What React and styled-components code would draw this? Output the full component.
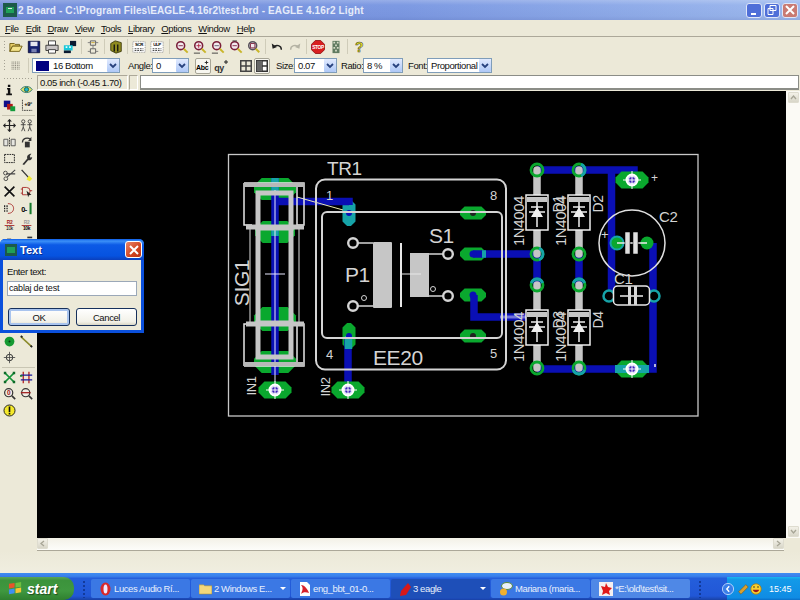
import React from "react";
import styled, { createGlobalStyle } from "styled-components";

const Global = createGlobalStyle`
  html, body { margin: 0; padding: 0; background: #ece9d8; overflow: hidden; }
  * { box-sizing: border-box; }
`;

const Screen = styled.div`
  position: relative;
  width: 800px;
  height: 600px;
  display: flex;
  flex-direction: column;
  background: #ece9d8;
  font-family: "Liberation Sans", Arial, sans-serif;
  font-size: 9.5px;
  letter-spacing: -0.4px;
  color: #111;
  overflow: hidden;
`;

const TitleBar = styled.div`
  height: 20px;
  flex: none;
  display: flex;
  align-items: center;
  padding: 0 2px 0 3px;
  background: linear-gradient(180deg, rgba(255,255,255,.22) 0, rgba(255,255,255,.02) 25%, rgba(0,0,40,.02) 80%, rgba(0,0,60,.08) 100%),
    linear-gradient(90deg, #7590dc 0, #7b98e2 50%, #9db9ee 100%);
`;

const TitleText = styled.div`
  flex: 1;
  margin-left: 1px;
  color: #e6ecfa;
  font-weight: bold;
  font-size: 10px;
  letter-spacing: 0.12px;
  white-space: nowrap;
`;

const CaptionBtn = styled.div`
  width: 16px;
  height: 15px;
  margin-left: 2px;
  border: 1px solid #dfe6f8;
  border-radius: 3px;
  background: ${(p) => (p.$close ? "#c97a72" : "#4f6fd8")};
  display: flex;
  align-items: center;
  justify-content: center;
`;

const MenuBar = styled.div`
  height: 17px;
  flex: none;
  display: flex;
  align-items: center;
  gap: 7px;
  padding: 0 5px;
  border-bottom: 1px solid #aca899;
`;

const MenuItem = styled.span`
  &::first-letter { text-decoration: underline; }
`;

const ToolRow = styled.div`
  height: 19px;
  flex: none;
  display: flex;
  align-items: center;
`;

const Grip = styled.div`
  width: 3px;
  height: 13px;
  margin: 0 1px 0 3px;
  flex: none;
  background: radial-gradient(circle, #a5a294 0.8px, transparent 1px) 0 0 / 3px 3px;
`;

const ToolBtn = styled.div`
  width: 18px;
  height: 18px;
  flex: none;
  display: flex;
  align-items: center;
  justify-content: center;
  svg { width: 14px; height: 14px; }
`;

const ToolSep = styled.div`
  width: 1px;
  height: 15px;
  flex: none;
  margin: 0 ${(p) => p.$m || 2}px;
  background: #cfccb9;
`;

const ParamLabel = styled.span`
  flex: none;
  width: ${(p) => p.$w}px;
  margin-left: ${(p) => p.$m}px;
  white-space: nowrap;
`;

const Combo = styled.div`
  width: ${(p) => p.$w}px;
  height: 15px;
  flex: none;
  display: flex;
  align-items: center;
  padding-left: 3px;
  background: #fff;
  border: 1px solid #7f9db9;
`;

const ComboText = styled.span`
  flex: 1;
  white-space: nowrap;
  margin-left: ${(p) => p.$m || 0}px;
`;

const Swatch = styled.span`
  width: 13px;
  height: 10px;
  flex: none;
  background: #000080;
`;

const ComboArrow = styled.span`
  width: 12px;
  height: 13px;
  flex: none;
  background: linear-gradient(180deg, #e1eafe, #aec8f7);
  border-radius: 1px;
  display: flex;
  align-items: center;
  justify-content: center;
`;

const ToggleBox = styled.div`
  width: 16px;
  height: 16px;
  flex: none;
  margin: ${(p) => p.$m || "0"};
  display: flex;
  align-items: center;
  justify-content: center;
  border: ${(p) => (p.$on ? "1px solid #a7a596" : "none")};
  border-radius: 2px;
  background: ${(p) => (p.$on ? "#f7f6ef" : "transparent")};
`;

const Work = styled.div`
  flex: 1;
  min-height: 0;
  display: flex;
`;

const Rail = styled.div`
  width: 37px;
  flex: none;
  padding-top: 2px;
`;

const RailGrip = styled.div`
  width: 30px;
  height: 4px;
  margin-left: 3px;
  background: radial-gradient(circle, #a5a294 0.8px, transparent 1px) 0 0 / 3px 3px;
`;

const RailGroup = styled.div`
  display: grid;
  grid-template-columns: 17px 17px;
  grid-auto-rows: 16.6px;
  padding-left: 1px;
`;

const RailCell = styled.div`
  display: flex;
  align-items: center;
  justify-content: center;
  svg { width: 13px; height: 13px; }
`;

const RailSep = styled.div`
  height: 1px;
  margin: 1px 2px;
  background: #c9c6b4;
`;

const Main = styled.div`
  flex: 1;
  min-width: 0;
  display: flex;
  flex-direction: column;
`;

const CommandRow = styled.div`
  height: 15px;
  flex: none;
  display: flex;
  gap: 1px;
`;

const CoordBox = styled.div`
  width: 91px;
  border: 1px solid #aca899;
  border-right-color: #fff;
  border-bottom-color: #fff;
  padding-left: 2px;
  line-height: 13px;
  white-space: nowrap;
`;

const SmallBox = styled.div`
  width: 9px;
  border: 1px solid #aca899;
  border-right-color: #fff;
  border-bottom-color: #fff;
`;

const CommandInput = styled.div`
  flex: 1;
  margin: 0 1px;
  background: #fff;
  border: 1px solid #8b8d87;
  border-bottom-width: 2px;
`;

const CanvasRow = styled.div`
  flex: 1;
  min-height: 0;
  display: flex;
  margin-top: 1px;
`;

const Canvas = styled.div`
  flex: 1;
  min-width: 0;
  background: #000;
  display: flex;
`;

const PcbSvg = styled.svg`
  display: block;
  width: 749px;
  height: 447px;
`;

const VScroll = styled.div`
  width: 14px;
  flex: none;
  background: #fbfaf5;
  display: flex;
  flex-direction: column;
  justify-content: space-between;
`;

const HScrollRow = styled.div`
  height: 13px;
  flex: none;
  display: flex;
`;

const HScroll = styled.div`
  flex: 1;
  background: linear-gradient(180deg, #f3f1e7, #fdfdfa);
  border-bottom: 1px solid #aca899;
  display: flex;
  justify-content: space-between;
`;

const ScrollBtn = styled.div`
  width: 11px;
  height: 11px;
  margin: ${(p) => (p.$v ? "1px 0 1px 2px" : "0")};
  background: linear-gradient(180deg, #f3f1e8, #d8d6c8);
  border: 1px solid #dedccf;
  border-radius: 1px;
  display: flex;
  align-items: center;
  justify-content: center;
`;

const Corner = styled.div`
  width: 16px;
  background: #ece9d8;
`;

const StatusBar = styled.div`
  height: 22px;
  flex: none;
  background: linear-gradient(180deg, #ece9d8, #f0eee0);
`;

const Taskbar = styled.div`
  height: 27px;
  flex: none;
  display: flex;
  align-items: flex-end;
  background: linear-gradient(180deg, #3f8cf3 0, #3a80ea 12%, #245edb 20%, #2157d7 85%, #1941a5 100%);
  color: #fff;
`;

const StartBtn = styled.div`
  width: 74px;
  height: 23px;
  flex: none;
  display: flex;
  align-items: center;
  padding-left: 8px;
  gap: 4px;
  border-radius: 0 10px 10px 0;
  background: linear-gradient(180deg, #5aa55a 0, #3c933c 15%, #3f983f 60%, #2f7f2f 100%);
`;

const StartLabel = styled.span`
  font-style: italic;
  font-weight: bold;
  font-size: 14px;
  letter-spacing: 0;
  color: #fff;
  text-shadow: 1px 1px 1px #1d4d1d;
`;

const TaskGrip = styled.div`
  width: 5px;
  height: 18px;
  flex: none;
  margin: ${(p) => p.$m || "0 4px 2px 8px"};
  background: radial-gradient(circle, #123a9a 1px, transparent 1.2px) 0 0 / 4px 4px;
`;

const TaskBtn = styled.div`
  width: 99px;
  height: 19px;
  flex: none;
  margin: 0 1px 2px 0;
  padding: 0 4px 0 8px;
  display: flex;
  align-items: center;
  gap: 2px;
  border-radius: 2px;
  white-space: nowrap;
  color: #e8effc;
  background: ${(p) => (p.$active ? "#1e4fb8" : p.$bright ? "#4f88e6" : "#3b78e4")};
`;

const TaskText = styled.span`
  flex: 1;
  overflow: hidden;
`;

const Tray = styled.div`
  margin-left: auto;
  width: 73px;
  height: 23px;
  flex: none;
  display: flex;
  align-items: center;
  gap: 1px;
  background: linear-gradient(180deg, #18b8f0 0, #139ae8 10%, #0f8ce4 90%, #0a6fc8 100%);
`;

const TrayChevron = styled.svg`
  margin: 0 2px 0 -5px;
`;

const Clock = styled.span`
  margin-left: 6px;
  letter-spacing: 0;
  font-size: 9px;
`;

const Dialog = styled.div`
  position: absolute;
  left: 0;
  top: 239px;
  width: 144px;
  height: 94px;
  display: flex;
  flex-direction: column;
  background: #0b50dc;
  border-radius: 5px 5px 0 0;
  padding: 0 3px 3px;
`;

const DialogHead = styled.div`
  height: 21px;
  flex: none;
  display: flex;
  align-items: center;
  margin: 0 -3px;
  padding: 0 2px 0 5px;
  border-radius: 5px 5px 0 0;
  background: linear-gradient(180deg, #0b5be6 0, #3c91f8 10%, #0c5ae6 28%, #0653e0 80%, #0a3fbc 100%);
`;

const DialogTitle = styled.span`
  flex: 1;
  margin-left: 3px;
  color: #fff;
  font-weight: bold;
  font-size: 11px;
  letter-spacing: 0;
  text-shadow: 1px 1px 0 #0a2f90;
`;

const DialogClose = styled.div`
  width: 17px;
  height: 17px;
  display: flex;
  align-items: center;
  justify-content: center;
  border: 1px solid #fff;
  border-radius: 3px;
  background: linear-gradient(135deg, #e8866a, #d2441f 60%, #b93212);
`;

const DialogBody = styled.div`
  flex: 1;
  display: flex;
  flex-direction: column;
  background: #ece9d8;
  padding: 6px 4px 0;
  line-height: 11px;
`;

const DialogInput = styled.div`
  height: 15px;
  margin-top: 4px;
  padding-left: 1px;
  background: #fff;
  border: 1px solid #9ba8b8;
  font-size: 9px;
  letter-spacing: -0.2px;
  line-height: 13px;
`;

const DialogActions = styled.div`
  display: flex;
  gap: 6px;
  margin-top: 12px;
  padding-left: 1px;
`;

const DialogBtn = styled.div`
  width: ${(p) => (p.$def ? 62 : 61)}px;
  height: 18px;
  display: flex;
  align-items: center;
  justify-content: center;
  border-radius: 3px;
  border: 1px solid #16305c;
  background: linear-gradient(180deg, #fff, #f2f1e8 80%, #d9d6c5);
  box-shadow: ${(p) => (p.$def ? "inset 0 0 0 2px #a9c4ee" : "none")};
`;

/* toolbar and rail pictures, all on a 16x16 grid */
const Ico = ({ s = 16, children }) => (
  <svg width={s} height={s} viewBox="0 0 16 16" style={{ display: "block" }}>
    {children}
  </svg>
);

const Magnifier = ({ children }) => (
  <Ico>
    <circle cx="6.500" cy="6.500" r="4.500" fill="#f2e9ee" stroke="#7a1f3a" strokeWidth="1.800" />
    <path d="M10 10l4.500 4.500" stroke="#c9b52a" strokeWidth="2.200" />
    {children}
  </Ico>
);

const icons = {
  open: (
    <Ico>
      <path d="M1 4h5l1 1h5v2H4L1 13z" fill="#e8cf6a" stroke="#6b5a10" />
      <path d="M4 7h11l-3 6H1z" fill="#f4e48a" stroke="#6b5a10" />
    </Ico>
  ),
  save: (
    <Ico>
      <path d="M1.500 1.500h13v13h-13z" fill="#15206e" stroke="#0a0f3c" />
      <path d="M4 2h8v5H4z" fill="#e6e6ee" />
      <path d="M5 10h6v4H5z" fill="#7880b0" />
    </Ico>
  ),
  print: (
    <Ico>
      <path d="M4 1h8v5H4z" fill="#fff" stroke="#333" />
      <path d="M1 6h14v6H1z" fill="#c8c4c4" stroke="#333" />
      <path d="M4 11h8v4H4z" fill="#fff" stroke="#333" />
    </Ico>
  ),
  layers: (
    <Ico>
      <path d="M8 1h7v6H8z" fill="#0b1a30" />
      <path d="M1 6h10v6H1z" fill="#18c8d8" />
      <path d="M1 12h8v3H1z" fill="#0b1a30" />
      <path d="M3 7h2v2H3zM7 7h2v2H7z" fill="#e8fbff" />
    </Ico>
  ),
  chip: (
    <Ico>
      <path d="M5 1h6v5H5zM5 10h6v5H5z" fill="none" stroke="#555" />
      <path d="M8 6v4M2 3h3M11 3h3M2 13h3M11 13h3" stroke="#777" />
      <path d="M6 3h4" stroke="#c9a72a" />
    </Ico>
  ),
  book: (
    <Ico>
      <path d="M2 4l5-3 7 2v10l-6 2-6-3z" fill="#8f8a1e" stroke="#3a3808" />
      <path d="M6 5v8M10 5v8" stroke="#111" strokeWidth="1.500" />
    </Ico>
  ),
  scr: (
    <Ico>
      <path d="M1 2h14v12H1z" fill="#fff" stroke="#888" strokeDasharray="1 1" />
      <text x="8" y="7" fontSize="5" textAnchor="middle" fontFamily="Liberation Sans" fontWeight="bold">SCR</text>
      <path d="M3 10h10M3 12h10" stroke="#333" strokeDasharray="2 1" />
    </Ico>
  ),
  ulp: (
    <Ico>
      <path d="M1 2h14v12H1z" fill="#fff" stroke="#888" strokeDasharray="1 1" />
      <text x="8" y="7" fontSize="5" textAnchor="middle" fontFamily="Liberation Sans" fontWeight="bold">ULP</text>
      <path d="M3 10h10M3 12h10" stroke="#333" strokeDasharray="2 1" />
    </Ico>
  ),
  zoomFit: <Magnifier><path d="M4 6.500h5" stroke="#7a1f3a" /></Magnifier>,
  zoomIn: <Magnifier><path d="M4 6.500h5M6.500 4v5" stroke="#b0203a" /><path d="M1 15h7" stroke="#333" /></Magnifier>,
  zoomOut: <Magnifier><path d="M4 6.500h5" stroke="#556" /><path d="M1 15h7" stroke="#333" /></Magnifier>,
  zoomSel: <Magnifier><path d="M4 6.500h5" stroke="#7a1f3a" /><path d="M4 1h5" stroke="#333" /></Magnifier>,
  zoomBox: (
    <Ico>
      <circle cx="6.500" cy="6.500" r="4.500" fill="#f2e9ee" stroke="#57505a" strokeWidth="1.800" />
      <path d="M4 4h5v5H4z" fill="none" stroke="#7a1f3a" />
      <path d="M10 10l4 4" stroke="#c9b52a" strokeWidth="2.200" />
    </Ico>
  ),
  undo: (
    <Ico>
      <path d="M13 11c0-5-6-6-9-3" fill="none" stroke="#222" strokeWidth="1.600" />
      <path d="M2 4l1 6 5-2z" fill="#222" />
    </Ico>
  ),
  redo: (
    <Ico>
      <path d="M3 11c0-5 6-6 9-3" fill="none" stroke="#b4b2a4" strokeWidth="1.600" />
      <path d="M14 4l-1 6-5-2z" fill="#b4b2a4" />
    </Ico>
  ),
  stop: (
    <Ico>
      <path d="M5 .5h6L15.500 5v6L11 15.500H5L.5 11V5z" fill="#d81f1f" stroke="#901010" />
      <text x="8" y="10" fontSize="5.500" textAnchor="middle" fill="#fff" fontFamily="Liberation Sans" fontWeight="bold">STOP</text>
    </Ico>
  ),
  cam: (
    <Ico>
      <path d="M4 1h8v14H4z" fill="#5f7a5f" />
      <path d="M5 2h2v2H5zM9 2h2v2H9zM7 5h2v2H7zM5 8h2v2H5zM9 8h2v2H9zM7 11h2v2H7z" fill="#d8dcc8" />
    </Ico>
  ),
  help: (
    <Ico>
      <text x="8" y="14" fontSize="16" textAnchor="middle" fill="#f2ee1a" stroke="#333" strokeWidth=".6" fontFamily="Liberation Sans" fontWeight="bold">?</text>
    </Ico>
  ),
  dots: (
    <Ico>
      <path d="M3 3.500h10M3 5.500h10M3 7.500h10M3 9.500h10M3 11.500h10" stroke="#6b695e" strokeDasharray="1 1" />
    </Ico>
  ),
  abc: (
    <Ico>
      <text x="7" y="13" fontSize="8" textAnchor="middle" fontFamily="Liberation Sans" fontWeight="bold">Abc</text>
      <path d="M12 2v4M10 4h4" stroke="#222" />
    </Ico>
  ),
  mirrorText: (
    <Ico>
      <text x="6" y="13" fontSize="9" textAnchor="middle" fontFamily="Liberation Sans" fontWeight="bold" fill="#333">qy</text>
      <path d="M13 2v4M11 4h4" stroke="#222" />
    </Ico>
  ),
  boxCross: (
    <Ico s={12}>
      <path d="M1 1h14v14H1zM8 1v14M1 8h14" fill="none" stroke="#444" strokeWidth="2" />
    </Ico>
  ),
  boxHalf: (
    <Ico s={12}>
      <path d="M1 1h14v14H1z" fill="#fff" stroke="#333" strokeWidth="2" />
      <path d="M8 1v14M8 8h7" stroke="#333" strokeWidth="2" />
      <path d="M1 1h7v14H1z" fill="#666" />
    </Ico>
  ),
  info: (
    <Ico>
      <path d="M6 2h3v3H6zM5 6h4v7h2v2H4v-2h2V8H5z" fill="#111" />
    </Ico>
  ),
  eye: (
    <Ico>
      <path d="M1 8c3-5 11-5 14 0-3 5-11 5-14 0z" fill="#e6e36a" stroke="#136a6a" />
      <circle cx="8" cy="8" r="2.600" fill="#18b8c8" stroke="#0b4a4a" />
    </Ico>
  ),
  display: (
    <Ico>
      <path d="M1 2h8v8H1z" fill="#10108a" />
      <path d="M5 6h7v7H5z" fill="#b01818" />
      <path d="M9 9h6v6H9z" fill="#129a3a" />
    </Ico>
  ),
  mark: (
    <Ico>
      <path d="M3 1v13h12" fill="none" stroke="#222" strokeDasharray="2 1" />
      <text x="10" y="8" fontSize="7" textAnchor="middle" fontFamily="Liberation Sans" fontWeight="bold">+9°</text>
    </Ico>
  ),
  move: (
    <Ico>
      <path d="M8 1v14M1 8h14" stroke="#222" strokeWidth="1.500" />
      <path d="M8 0l-3 3h6zM8 16l-3-3h6zM0 8l3-3v6zM16 8l-3-3v6z" fill="#222" />
    </Ico>
  ),
  copy: (
    <Ico>
      <circle cx="4" cy="3" r="2" fill="none" stroke="#333" />
      <circle cx="12" cy="3" r="2" fill="none" stroke="#333" />
      <path d="M4 5v5M1 7h6M4 10l-2 5M4 10l2 5M12 5v5M9 7h6M12 10l-2 5M12 10l2 5" stroke="#333" />
    </Ico>
  ),
  mirror: (
    <Ico>
      <path d="M1 4h5v8H1zM10 4h5v8h-5z" fill="#e6e6e0" stroke="#444" />
      <path d="M8 2v12" stroke="#222" strokeDasharray="2 1" />
    </Ico>
  ),
  rotate: (
    <Ico>
      <path d="M6 7h6v7H6z" fill="#333" />
      <path d="M3 8C3 3 9 1 13 4" fill="none" stroke="#333" strokeWidth="1.500" />
      <path d="M14 1v5h-4z" fill="#333" />
    </Ico>
  ),
  group: (
    <Ico>
      <path d="M2 3h12v10H2z" fill="none" stroke="#222" strokeDasharray="2 1" strokeWidth="1.200" />
    </Ico>
  ),
  change: (
    <Ico>
      <path d="M3 15l6-7c-1-3 1-6 5-6l-2 3 1 2 2-1c0 3-3 5-5 4l-5 6z" fill="#333" />
    </Ico>
  ),
  cut: (
    <Ico>
      <path d="M15 1L5 10M15 6L4 6" stroke="#444" strokeWidth="1.300" />
      <circle cx="3.500" cy="12" r="2.300" fill="none" stroke="#333" />
      <circle cx="3" cy="5" r="2.300" fill="none" stroke="#333" />
    </Ico>
  ),
  paste: (
    <Ico>
      <path d="M2 1l9 10" stroke="#333" strokeWidth="1.600" />
      <path d="M11 8l4 4-3 3-4-2z" fill="#f2ea30" />
    </Ico>
  ),
  del: (
    <Ico>
      <path d="M2 2l12 12M14 2L2 14" stroke="#111" strokeWidth="2" />
    </Ico>
  ),
  add: (
    <Ico>
      <path d="M3 3h5a4 4 0 010 9H3z" fill="none" stroke="#a01818" />
      <path d="M1 5h2M1 10h2M12 7h3" stroke="#a01818" />
      <path d="M8 7l6 5-3 .5L10 15z" fill="#222" />
    </Ico>
  ),
  pinswap: (
    <Ico>
      <path d="M6 2c5 0 7 3 7 6s-2 6-7 6" fill="none" stroke="#a01818" />
      <path d="M2 4v8M5 4v8" stroke="#222" strokeDasharray="2 1" strokeWidth="1.500" />
    </Ico>
  ),
  gateswap: (
    <Ico>
      <text x="5" y="12" fontSize="9" textAnchor="middle" fontFamily="Liberation Sans" fontWeight="bold">0-</text>
      <path d="M13 1v14" stroke="#167a2c" strokeWidth="2.500" />
    </Ico>
  ),
  name: (
    <Ico>
      <text x="8" y="6" fontSize="6" textAnchor="middle" fill="#a01818" fontFamily="Liberation Sans" fontWeight="bold">R2</text>
      <path d="M2 8h12" stroke="#a01818" />
      <text x="8" y="14" fontSize="6" textAnchor="middle" fontFamily="Liberation Sans">10k</text>
    </Ico>
  ),
  value: (
    <Ico>
      <text x="8" y="6" fontSize="6" textAnchor="middle" fill="#999" fontFamily="Liberation Sans" fontWeight="bold">R2</text>
      <path d="M2 8h12" stroke="#a01818" />
      <text x="8" y="14" fontSize="6" textAnchor="middle" fontFamily="Liberation Sans" fontWeight="bold">10k</text>
    </Ico>
  ),
  smash: (
    <Ico>
      <path d="M2 8h11v7H2z" fill="none" stroke="#333" />
      <path d="M5 8V5h5v3" fill="none" stroke="#333" />
    </Ico>
  ),
  split: (
    <Ico>
      <path d="M1 14L15 6" stroke="#333" strokeWidth="2" />
      <path d="M9 3h6" stroke="#333" strokeWidth="2" />
    </Ico>
  ),
  via: (
    <Ico>
      <circle cx="8" cy="8" r="6" fill="#159a32" />
      <circle cx="8" cy="8" r="1.200" fill="#0a3a14" />
    </Ico>
  ),
  route: (
    <Ico>
      <path d="M1 2l13 12" stroke="#8a8a2a" strokeWidth="1.800" />
      <path d="M1 1l2 2M13 13l2 2" stroke="#222" strokeWidth="2" />
    </Ico>
  ),
  hole: (
    <Ico>
      <circle cx="8" cy="8" r="4" fill="#ece9d8" stroke="#333" strokeWidth="1.200" />
      <path d="M8 1v14M1 8h14" stroke="#444" />
    </Ico>
  ),
  ratsnest: (
    <Ico>
      <path d="M2 2l12 12M14 2L2 14" stroke="#16933a" strokeWidth="1.800" />
      <path d="M1 1h3v3H1zM12 1h3v3h-3zM1 12h3v3H1zM12 12h3v3h-3z" fill="#0c6a28" />
    </Ico>
  ),
  auto: (
    <Ico>
      <path d="M4 1v14M11 1v14" stroke="#b01818" strokeWidth="1.500" />
      <path d="M1 5h14M1 11h14" stroke="#1a1a9a" strokeWidth="1.500" />
      <path d="M0 6l3 0" stroke="#167a2c" strokeWidth="2" />
    </Ico>
  ),
  ripup: (
    <Ico>
      <circle cx="7" cy="7" r="5" fill="#f0ece4" stroke="#333" strokeWidth="1.500" />
      <text x="7" y="10" fontSize="8" textAnchor="middle" fill="#a01818" fontFamily="Liberation Sans" fontWeight="bold">0</text>
      <path d="M11 11l4 4" stroke="#333" strokeWidth="2" />
    </Ico>
  ),
  show: (
    <Ico>
      <circle cx="7" cy="7" r="5" fill="#f0ece4" stroke="#333" strokeWidth="1.500" />
      <path d="M1 7h12" stroke="#a01818" strokeWidth="1.500" />
      <path d="M11 11l4 4" stroke="#333" strokeWidth="2" />
    </Ico>
  ),
  drc: (
    <Ico>
      <circle cx="8" cy="8" r="6.800" fill="#f5e92a" stroke="#222" strokeWidth="1.200" />
      <path d="M7 3h2v7H7zM7 11h2v2H7z" fill="#111" />
    </Ico>
  ),
};

const Chevron = () => (
  <svg width="8" height="6" viewBox="0 0 8 6">
    <path d="M1 1l3 3 3-3" fill="none" stroke="#28427e" strokeWidth="1.800" />
  </svg>
);

const ScrollArrow = ({ d }) => (
  <svg width="7" height="7" viewBox="0 0 7 7">
    <path d={d} fill="none" stroke="#a7a596" strokeWidth="1.300" />
  </svg>
);

const menu = ["File", "Edit", "Draw", "View", "Tools", "Library", "Options", "Window", "Help"];

const railTop = ["info", "eye", "display", "mark"];
const railEdit = [
  "move", "copy", "mirror", "rotate", "group", "change", "cut", "paste", "del", "add",
  "pinswap", "gateswap", "name", "value", "smash", "split",
];
const railRoute = ["via", "route", "hole", null];
const railLast = ["ratsnest", "auto", "ripup", "show", "drc", null];

const Combobox = ({ w, text }) => (
  <Combo $w={w}>
    <ComboText>{text}</ComboText>
    <ComboArrow><Chevron /></ComboArrow>
  </Combo>
);

const RailIcons = ({ names }) => (
  <RailGroup>
    {names.map((n, i) => (
      <RailCell key={i}>{n && icons[n]}</RailCell>
    ))}
  </RailGroup>
);

const GREEN = "#0aa82e";
const BLUE = "#0a0fb4";
const TEAL = "#16a3a8";
const GRAY = "#c6c6c6";
const LINE = "#d4d4d4";

const octagon = (cx, cy, w, h) => {
  const c = Math.min(w, h) * 0.35;
  const x = w / 2;
  const y = h / 2;
  return [
    [cx - x + c, cy - y], [cx + x - c, cy - y], [cx + x, cy - y + c], [cx + x, cy + y - c],
    [cx + x - c, cy + y], [cx - x + c, cy + y], [cx - x, cy + y - c], [cx - x, cy - y + c],
  ].map((p) => p.join(",")).join(" ");
};

const Pad = ({ x, y, w, h, fill = GREEN }) => (
  <polygon points={octagon(x, y, w, h)} fill={fill} />
);

const PlatedPad = ({ x, y, w = 33, h = 17, tint }) => (
  <g>
    <Pad x={x} y={y} w={w} h={h} />
    {tint && <rect x={x - 17} y={y - 4} width={34} height={8} fill={TEAL} />}
    <circle cx={x} cy={y} r="5.500" fill="#d8d8f4" stroke="#fff" strokeWidth="2" />
    <circle cx={x} cy={y} r="3" fill="#3a1fb8" />
    <path d={`M${x - 9} ${y}h18M${x} ${y - 9}v18`} stroke="#fff" strokeWidth="1" />
  </g>
);

const arc = (x, y, from, to) => {
  const r = 6;
  const pt = (a) => `${x + r * Math.cos((a * Math.PI) / 180)} ${y + r * Math.sin((a * Math.PI) / 180)}`;
  return `M${pt(from)}A${r} ${r} 0 0 1 ${pt(to)}`;
};

const Via = ({ x, y, from, to }) => (
  <g>
    <circle cx={x} cy={y} r="6" fill="none" stroke={GREEN} strokeWidth="2.800" />
    {from !== undefined && <path d={arc(x, y, from, to)} fill="none" stroke={TEAL} strokeWidth="2.800" />}
  </g>
);

const Diode = ({ x, y }) => (
  <g>
    <rect x={x} y={y} width="22" height="35" fill="#000" stroke="#eee" strokeWidth="1.500" />
    <rect x={x + 1} y={y + 2} width="20" height="5" fill={GRAY} />
    <path d={`M${x + 11} ${y + 12}L${x + 5} ${y + 22}h12z`} fill="#eee" />
    <path d={`M${x + 3} ${y + 17}h16M${x + 11} ${y + 7}v25M${x + 5} ${y + 12}h12`} stroke="#eee" strokeWidth="1.500" />
  </g>
);

const VText = ({ x, y, size = 14, children }) => (
  <text
    transform={`translate(${x} ${y}) rotate(-90)`}
    fontSize={size}
    fill={LINE}
    textAnchor="middle"
    fontFamily="Liberation Sans, sans-serif"
  >
    {children}
  </text>
);

const HText = ({ x, y, size = 14, children }) => (
  <text x={x} y={y} fontSize={size} fill={LINE} fontFamily="Liberation Sans, sans-serif">
    {children}
  </text>
);

const Ring = ({ x, y }) => (
  <circle cx={x} cy={y} r="4.800" fill="#000" stroke={LINE} strokeWidth="2.400" />
);

const Board = () => (
  <PcbSvg viewBox="37 91 749 447">
    <rect x="228.500" y="154.500" width="469.500" height="261.500" fill="none" stroke="#c8c8c8" strokeWidth="1.300" />

    {/* copper pads under everything */}
    <Pad x={275} y={189} w={42} h={22} />
    <Pad x={275} y={232} w={40} h={22} />
    <Pad x={275} y={319} w={42} h={24} />
    <Pad x={275} y={362} w={42} h={22} />
    <Pad x={349} y={213} w={13} h={26} fill={TEAL} />
    <Pad x={349} y={336} w={13} h={26} />
    <Pad x={473} y={213} w={26} h={13} />
    <Pad x={473} y={254} w={26} h={13} />
    <Pad x={473} y={295} w={26} h={13} />
    <Pad x={473} y={336} w={26} h={13} />

    {/* bottom traces */}
    <path
      d="M275 178V375M275 201.500H349V205M348 338V390M473 254H537M474 295V317H537M537 254V285M579 254V285M537 170H634V176M611.500 170V296M537 369H653V243"
      fill="none"
      stroke={BLUE}
      strokeWidth="7.500"
    />
    <path d="M275 178v14M275 228v8" stroke={TEAL} strokeWidth="7.500" />
    <path d="M348.500 336v13" stroke={TEAL} strokeWidth="7.500" />
    <path d="M482 254h4" stroke={TEAL} strokeWidth="7.500" />
    <circle cx="349" cy="213" r="3" fill={BLUE} />
    <circle cx="349" cy="336" r="3" fill={BLUE} />
    <circle cx="473" cy="254" r="3.500" fill={BLUE} />
    <circle cx="473" cy="295" r="3.500" fill={BLUE} />
    <circle cx="473" cy="213" r="3" fill="#222" />
    <circle cx="473" cy="336" r="3" fill="#222" />

    {/* air wires */}
    <path d="M297 197L343 210" stroke="#e8e8b0" strokeWidth="1" />
    <path d="M275 190V385M265 274h20" stroke="#e8e8ff" strokeWidth="1" />
    <path d="M500 317H526M579 285V315" stroke="#b8b8f0" strokeWidth="3" opacity=".6" />

    {/* SIG1 fuse holder */}
    <path d="M250 228V323M299 228V323" stroke="#e2e2e2" strokeWidth="1" />
    <path d="M258 228V323M291 228V323" stroke={GRAY} strokeWidth="5" />
    <path d="M244 183H304V225H297V183M244 183V225H252" fill="none" stroke="#e8e8e8" strokeWidth="1.500" />
    <path d="M244 366H304V324H297V366M244 366V324H252" fill="none" stroke="#e8e8e8" strokeWidth="1.500" />
    <rect x="244" y="183" width="60" height="4" fill="#b8b8b8" />
    <rect x="244" y="362" width="60" height="4" fill="#b8b8b8" />
    <path d="M258 193H291V228H258ZM258 323H291V357H258Z" fill="none" stroke={GRAY} strokeWidth="5" />
    <path d="M246 227H304M246 324H304" stroke={GRAY} strokeWidth="5" />

    {/* transformer outlines */}
    <rect x="316" y="179.500" width="190" height="190" rx="9" fill="none" stroke={LINE} strokeWidth="2" />
    <rect x="322" y="212" width="180" height="126" rx="5" fill="none" stroke={LINE} strokeWidth="2" />

    {/* P1 / S1 relay symbol */}
    <path d="M353 243H373M353 306H373M429 254H448M429 296H448" stroke={LINE} strokeWidth="1.500" />
    <rect x="373" y="242" width="19" height="66" rx="1" fill={GRAY} />
    <rect x="410" y="253" width="19" height="44" fill={GRAY} />
    <path d="M401 243V307" stroke="#e8e8e8" strokeWidth="2" />
    <path d="M401 274H421" stroke="#e8e8e8" strokeWidth="1" />
    <Ring x={353} y={243} />
    <Ring x={353} y={306} />
    <Ring x={448} y={254} />
    <Ring x={448} y={296} />
    <circle cx="364" cy="298" r="2.500" fill="#000" stroke={LINE} />
    <circle cx="433" cy="289" r="2.500" fill="#000" stroke={LINE} />

    {/* through hole pads IN1 IN2 */}
    <PlatedPad x={275} y={390} />
    <PlatedPad x={348} y={390} />
    <VText x={249} y={283} size={21}>SIG1</VText>
    <VText x={256} y={386} size={13}>IN1</VText>
    <VText x={330} y={387} size={13}>IN2</VText>
    <HText x={327} y={175} size={19}>TR1</HText>
    <HText x={326} y={200} size={13}>1</HText>
    <HText x={490} y={200} size={13}>8</HText>
    <HText x={326} y={359} size={13}>4</HText>
    <HText x={490} y={358} size={13}>5</HText>
    <HText x={373} y={365} size={21}>EE20</HText>
    <HText x={429} y={243} size={21}>S1</HText>
    <HText x={345} y={282} size={21}>P1</HText>

    {/* diode leads and vias */}
    {[537, 579].map((x) => (
      <g key={x}>
        <path d={`M${x} 170V254M${x} 285V368`} stroke={GRAY} strokeWidth="7.500" strokeLinecap="round" />
        <Diode x={x - 11} y={195} />
        <Diode x={x - 11} y={310} />
      </g>
    ))}
    <Via x={537} y={170} />
    <Via x={579} y={170} from={-70} to={70} />
    <Via x={537} y={254} from={-70} to={70} />
    <Via x={579} y={254} />
    <Via x={537} y={285} from={200} to={340} />
    <Via x={579} y={285} from={200} to={340} />
    <Via x={537} y={368} />
    <Via x={579} y={368} from={20} to={160} />
    <VText x={524} y={221} size={15}>1N4004</VText>
    <VText x={566} y={221} size={15}>1N4004</VText>
    <VText x={524} y={337} size={15}>1N4004</VText>
    <VText x={566} y={337} size={15}>1N4004</VText>
    <VText x={563} y={204} size={14}>D1</VText>
    <VText x={603} y={204} size={14}>D2</VText>
    <VText x={563} y={320} size={14}>D3</VText>
    <VText x={603} y={320} size={14}>D4</VText>

    {/* capacitors */}
    <circle cx="632" cy="243" r="33" fill="none" stroke="#e0e0e0" strokeWidth="1.500" />
    <circle cx="617" cy="243" r="6.500" fill={GREEN} stroke={TEAL} strokeWidth="2" />
    <circle cx="647" cy="243" r="6.500" fill={GREEN} />
    <path d="M617 243H647" stroke="#eee" strokeWidth="1.500" />
    <rect x="625" y="232" width="5" height="22" fill="#e0e0e0" stroke="#000" strokeWidth=".5" />
    <rect x="633" y="232" width="5" height="22" fill="#e0e0e0" stroke="#000" strokeWidth=".5" />
    <HText x={601} y={239} size={13}>+</HText>
    <HText x={659} y={222} size={15}>C2</HText>
    <circle cx="609" cy="296" r="5.500" fill="#000" stroke={TEAL} strokeWidth="2.500" />
    <circle cx="654" cy="296" r="5.500" fill="#000" stroke={TEAL} strokeWidth="2.500" />
    <rect x="613.500" y="286" width="36" height="19" rx="4" fill="#000" stroke="#e8e8e8" strokeWidth="1.500" />
    <path d="M620 296H643" stroke="#eee" strokeWidth="1.500" />
    <rect x="628" y="286" width="3" height="19" fill="#d8d8d8" />
    <rect x="634" y="286" width="3" height="19" fill="#d8d8d8" />
    <HText x={614} y={284} size={15}>C1</HText>

    <PlatedPad x={632} y={180} />
    <PlatedPad x={632} y={369} tint />
    <HText x={651} y={182} size={12}>+</HText>
    <path d="M655 364v3" stroke="#eee" strokeWidth="1.500" />
  </PcbSvg>
);

export default function App() {
  return (
    <Screen>
      <Global />
      <TitleBar>
        <svg width="14" height="14" viewBox="0 0 14 14">
          <rect width="14" height="14" fill="#1d5a4a" />
          <path d="M3 4h8v6H3z" fill="#1fa05a" />
          <path d="M5 5h4v1H5z" fill="#e8e8e8" />
        </svg>
        <TitleText>2 Board - C:\Program Files\EAGLE-4.16r2\test.brd - EAGLE 4.16r2 Light</TitleText>
        <CaptionBtn>
          <svg width="9" height="9" viewBox="0 0 9 9"><path d="M1 7h5v2H1z" fill="#fff" /></svg>
        </CaptionBtn>
        <CaptionBtn>
          <svg width="10" height="10" viewBox="0 0 10 10">
            <path d="M3 .5h6v5H3zM1 3.500h5v6H1z" fill="none" stroke="#fff" />
          </svg>
        </CaptionBtn>
        <CaptionBtn $close>
          <svg width="10" height="10" viewBox="0 0 10 10">
            <path d="M1 1l8 8M9 1L1 9" stroke="#fff" strokeWidth="2" />
          </svg>
        </CaptionBtn>
      </TitleBar>

      <MenuBar>
        {menu.map((m) => (
          <MenuItem key={m}>{m}</MenuItem>
        ))}
      </MenuBar>

      <ToolRow>
        <Grip />
        <ToolBtn>{icons.open}</ToolBtn>
        <ToolBtn>{icons.save}</ToolBtn>
        <ToolBtn>{icons.print}</ToolBtn>
        <ToolBtn>{icons.layers}</ToolBtn>
        <ToolSep />
        <ToolBtn>{icons.chip}</ToolBtn>
        <ToolSep />
        <ToolBtn>{icons.book}</ToolBtn>
        <ToolSep />
        <ToolBtn>{icons.scr}</ToolBtn>
        <ToolBtn>{icons.ulp}</ToolBtn>
        <ToolSep $m={3} />
        <ToolBtn>{icons.zoomFit}</ToolBtn>
        <ToolBtn>{icons.zoomIn}</ToolBtn>
        <ToolBtn>{icons.zoomOut}</ToolBtn>
        <ToolBtn>{icons.zoomSel}</ToolBtn>
        <ToolBtn>{icons.zoomBox}</ToolBtn>
        <ToolSep />
        <ToolBtn>{icons.undo}</ToolBtn>
        <ToolBtn>{icons.redo}</ToolBtn>
        <ToolSep />
        <ToolBtn>{icons.stop}</ToolBtn>
        <ToolBtn>{icons.cam}</ToolBtn>
        <ToolSep />
        <ToolBtn>{icons.help}</ToolBtn>
      </ToolRow>

      <ToolRow>
        <Grip />
        <ToolBtn>{icons.dots}</ToolBtn>
        <ToolSep $m={3} />
        <Combo $w={88}>
          <Swatch />
          <ComboText $m={4}>16 Bottom</ComboText>
          <ComboArrow><Chevron /></ComboArrow>
        </Combo>
        <ParamLabel $w={24} $m={8}>Angle:</ParamLabel>
        <Combobox w={37} text="0" />
        <ToggleBox $on $m="0 2px 0 6px">{icons.abc}</ToggleBox>
        <ToggleBox>{icons.mirrorText}</ToggleBox>
        <ToggleBox $m="0 0 0 9px">{icons.boxCross}</ToggleBox>
        <ToggleBox $on>{icons.boxHalf}</ToggleBox>
        <ParamLabel $w={18} $m={6}>Size:</ParamLabel>
        <Combobox w={43} text="0.07" />
        <ParamLabel $w={22} $m={4}>Ratio:</ParamLabel>
        <Combobox w={40} text="8 %" />
        <ParamLabel $w={19} $m={5}>Font:</ParamLabel>
        <Combobox w={65} text="Proportional" />
      </ToolRow>

      <Work>
        <Rail>
          <RailGrip />
          <RailIcons names={railTop} />
          <RailSep />
          <RailIcons names={railEdit} />
          <RailGroup>
            {Array.from({ length: 10 }).map((_, i) => (
              <RailCell key={i} />
            ))}
          </RailGroup>
          <RailIcons names={railRoute} />
          <RailSep />
          <RailIcons names={railLast} />
        </Rail>
        <Main>
          <CommandRow>
            <CoordBox>0.05 inch (-0.45 1.70)</CoordBox>
            <SmallBox />
            <CommandInput />
          </CommandRow>
          <CanvasRow>
            <Canvas><Board /></Canvas>
            <VScroll>
              <ScrollBtn $v><ScrollArrow d="M1 5l2.500-3L6 5" /></ScrollBtn>
              <ScrollBtn $v><ScrollArrow d="M1 2l2.500 3L6 2" /></ScrollBtn>
            </VScroll>
          </CanvasRow>
          <HScrollRow>
            <HScroll>
              <ScrollBtn><ScrollArrow d="M5 1L2 3.500 5 6" /></ScrollBtn>
              <ScrollBtn><ScrollArrow d="M2 1l3 2.500L2 6" /></ScrollBtn>
            </HScroll>
            <Corner />
          </HScrollRow>
        </Main>
      </Work>

      <StatusBar />

      <Taskbar>
        <StartBtn>
          <svg width="15" height="15" viewBox="0 0 16 16">
            <path d="M1 3l6-1v5l-6 1z" fill="#e8552a" />
            <path d="M8 2l6-1v5l-6 1z" fill="#6fc040" />
            <path d="M1 9l6-1v5l-6 1z" fill="#3f8ff0" />
            <path d="M8 8l6-1v5l-6 1z" fill="#f5c531" />
          </svg>
          <StartLabel>start</StartLabel>
        </StartBtn>
        <TaskGrip />
        <TaskBtn>
          <svg width="13" height="14" viewBox="0 0 13 14">
            <ellipse cx="6.500" cy="7" rx="5" ry="6.500" fill="#d8282a" />
            <ellipse cx="6.500" cy="7" rx="2" ry="4.500" fill="#f0e8ff" />
          </svg>
          <TaskText>Luces Audio Rí...</TaskText>
        </TaskBtn>
        <TaskBtn>
          <svg width="13" height="12" viewBox="0 0 14 13">
            <path d="M0 2h5l1 1h8v9H0z" fill="#f3d77b" stroke="#a08a38" strokeWidth=".6" />
          </svg>
          <TaskText>2 Windows E...</TaskText>
          <svg width="6" height="4" viewBox="0 0 6 4"><path d="M0 0h6L3 3z" fill="#fff" /></svg>
        </TaskBtn>
        <TaskBtn>
          <svg width="12" height="14" viewBox="0 0 12 14">
            <path d="M1 0h7l3 3v11H1z" fill="#fff" />
            <path d="M2 3c4 0 7 5 8 8-3-1-6-1-8 1 1-3 3-6 0-9z" fill="#d8202a" />
          </svg>
          <TaskText>eng_bbt_01-0...</TaskText>
        </TaskBtn>
        <TaskBtn $active>
          <svg width="12" height="14" viewBox="0 0 12 14">
            <path d="M9 1l3 4-5 8-6 1 1-5z" fill="#d81818" />
          </svg>
          <TaskText>3 eagle</TaskText>
          <svg width="6" height="4" viewBox="0 0 6 4"><path d="M0 0h6L3 3z" fill="#fff" /></svg>
        </TaskBtn>
        <TaskBtn>
          <svg width="14" height="14" viewBox="0 0 14 14">
            <ellipse cx="8" cy="4" rx="5.500" ry="3.500" fill="#e8f0fa" stroke="#5a8a3a" />
            <circle cx="4.500" cy="10" r="3.500" fill="#f0b030" />
          </svg>
          <TaskText>Mariana (maria...</TaskText>
        </TaskBtn>
        <TaskBtn $bright>
          <svg width="14" height="14" viewBox="0 0 14 14">
            <rect width="14" height="14" fill="#f4f0f0" />
            <path d="M2 4l4 1 1-4 2 4 4 1-3 3 1 4-4-2-4 2 1-4z" fill="#e01818" />
          </svg>
          <TaskText>*E:\old\test\sit...</TaskText>
        </TaskBtn>
        <TaskGrip $m="0 0 2px 7px" />
        <Tray>
          <TrayChevron width="12" height="12" viewBox="0 0 15 15">
            <circle cx="7.500" cy="7.500" r="7" fill="#3a7fe8" stroke="#cfe4ff" />
            <path d="M9 4L6 7.500 9 11" fill="none" stroke="#fff" strokeWidth="1.800" />
          </TrayChevron>
          <svg width="12" height="12" viewBox="0 0 15 15">
            <path d="M2 11l9-9 3 3-9 9z" fill="#d8a030" stroke="#6a4a10" strokeWidth=".6" />
          </svg>
          <svg width="12" height="12" viewBox="0 0 15 15">
            <circle cx="7.500" cy="7.500" r="6.500" fill="#f8d030" stroke="#a87810" />
            <path d="M3.500 8.500c1 4 7 4 8 0z" fill="#a01818" />
            <path d="M4 5h2M9 5h2" stroke="#222" strokeWidth="1.500" />
          </svg>
          <Clock>15:45</Clock>
        </Tray>
      </Taskbar>

      <Dialog>
        <DialogHead>
          <svg width="12" height="12" viewBox="0 0 12 12">
            <rect width="12" height="12" fill="#1d5a4a" />
            <path d="M2 3h8v6H2z" fill="#1fa05a" />
          </svg>
          <DialogTitle>Text</DialogTitle>
          <DialogClose>
            <svg width="10" height="10" viewBox="0 0 10 10">
              <path d="M1 1l8 8M9 1L1 9" stroke="#fff" strokeWidth="2" />
            </svg>
          </DialogClose>
        </DialogHead>
        <DialogBody>
          <span>Enter text:</span>
          <DialogInput>cablaj de test</DialogInput>
          <DialogActions>
            <DialogBtn $def>OK</DialogBtn>
            <DialogBtn>Cancel</DialogBtn>
          </DialogActions>
        </DialogBody>
      </Dialog>
    </Screen>
  );
}
